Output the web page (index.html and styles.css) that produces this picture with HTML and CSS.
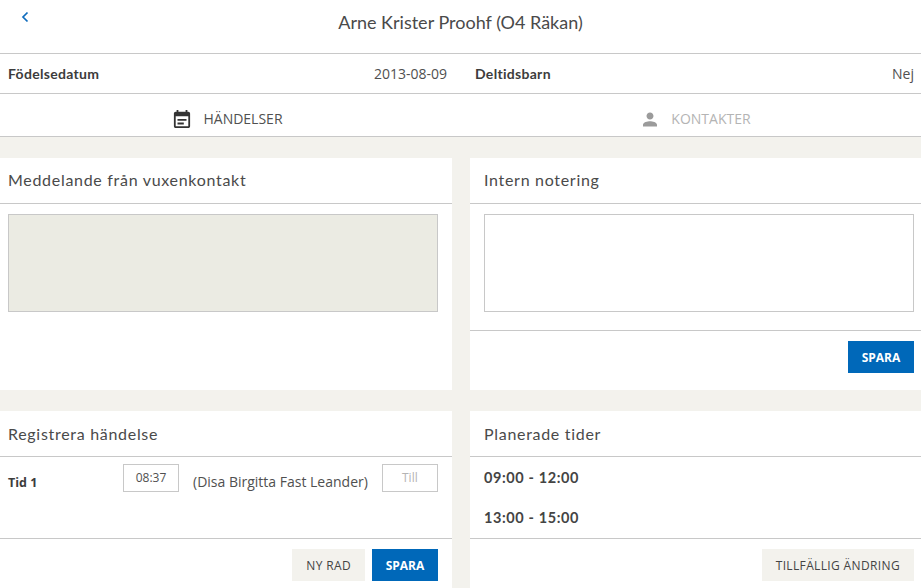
FILE: index.html
```html
<!DOCTYPE html>
<html lang="sv">
<head>
<meta charset="utf-8">
<title>Arne Krister Proohf</title>
<link rel="stylesheet" href="styles.css">
</head>
<body>
<header class="top">
  <a class="back" href="#" aria-label="Tillbaka">
    <svg width="10" height="12" viewBox="0 0 10 12"><path d="M7.500 1.500 3 6l4.500 4.500" fill="none" stroke="#0f6cbd" stroke-width="1.700"/></svg>
  </a>
  <h1 class="title">Arne Krister Proohf (O4 Räkan)</h1>
</header>
<section class="info">
  <div class="info-cell info-left"><strong class="info-label">Födelsedatum</strong><span>2013-08-09</span></div>
  <div class="info-cell info-right"><strong class="info-label">Deltidsbarn</strong><span>Nej</span></div>
</section>
<nav class="tabs">
  <div class="tab tab-first">
    <svg class="tab-icon" width="24" height="24" viewBox="0 0 24 24"><path fill="#333" d="M17 12H7v2h10v-2zm-3 4H7v2h7v-2zM19 4h-1V2h-2v2H8V2H6v2H5c-1.100 0-2 .9-2 2v14c0 1.100.9 2 2 2h14c1.100 0 2-.9 2-2V6c0-1.100-.9-2-2-2zm0 16H5V9h14v11z" transform="translate(1.200 1.200) scale(.9)"/></svg>
    <span>HÄNDELSER</span>
  </div>
  <div class="tab tab-muted">
    <svg class="tab-icon" width="24" height="24" viewBox="0 0 24 24"><path fill="#9b9b9b" d="M12 12c2.200 0 4-1.800 4-4s-1.800-4-4-4-4 1.800-4 4 1.800 4 4 4zm0 2c-2.700 0-8 1.300-8 4v2h16v-2c0-2.700-5.300-4-8-4z" transform="translate(1.500 2) scale(.875)"/></svg>
    <span>KONTAKTER</span>
  </div>
</nav>
<main class="grid">
  <section class="panel">
    <h2 class="panel-head">Meddelande från vuxenkontakt</h2>
    <div class="panel-body"><div class="box box-filled"></div></div>
  </section>
  <section class="panel">
    <h2 class="panel-head panel-head-right">Intern notering</h2>
    <div class="panel-body panel-body-right"><div class="box"></div></div>
    <div class="panel-foot panel-foot-right panel-foot-tall"><button class="btn btn-primary btn-wide">SPARA</button></div>
  </section>
  <section class="panel">
    <h2 class="panel-head panel-head-low">Registrera händelse</h2>
    <div class="panel-body event">
      <strong class="event-label">Tid 1</strong>
      <div class="time">08:37</div>
      <span class="event-name">(Disa Birgitta Fast Leander)</span>
      <div class="time time-empty">Till</div>
    </div>
    <div class="panel-foot panel-foot-left">
      <button class="btn">NY RAD</button>
      <button class="btn btn-primary btn-wide">SPARA</button>
    </div>
  </section>
  <section class="panel">
    <h2 class="panel-head panel-head-right panel-head-low">Planerade tider</h2>
    <div class="panel-body panel-body-right times">
      <p class="slot">09:00 - 12:00</p>
      <p class="slot">13:00 - 15:00</p>
    </div>
    <div class="panel-foot panel-foot-right"><button class="btn">TILLFÄLLIG ÄNDRING</button></div>
  </section>
</main>
</body>
</html>
```
FILE: styles.css
```css
* { box-sizing: border-box; }
html, body { height: 100%; }
body {
  margin: 0;
  background: #fff;
  color: #505050;
  font-family: "Open Sans", "Liberation Sans", sans-serif;
  font-size: 14px;
  overflow: hidden;
}
.top {
  position: relative;
  height: 54px;
  border-bottom: 1px solid #c8c8c8;
  display: flex;
  justify-content: center;
  padding-top: 11px;
}
.back {
  position: absolute;
  left: 20px;
  top: 11px;
  display: block;
  line-height: 0;
}
.title {
  margin: 0;
  font-family: "Lato", sans-serif;
  font-weight: 400;
  font-size: 18px;
  line-height: 22px;
  color: #4a4a4a;
}
.info {
  height: 40px;
  border-bottom: 1px solid #c8c8c8;
  display: flex;
}
.info-cell {
  display: flex;
  justify-content: space-between;
  align-items: center;
}
.info-left { width: 447px; padding-left: 8px; }
.info-right { flex: 1; padding: 0 7px 0 28px; }
.info-label {
  font-family: "Lato", sans-serif;
  font-weight: 700;
  font-size: 14px;
  letter-spacing: .3px;
  color: #3c3c3c;
}
.tabs {
  height: 43px;
  border-bottom: 1px solid #c8c8c8;
  display: flex;
}
.tab {
  flex: 1;
  display: flex;
  justify-content: center;
  align-items: center;
  gap: 9px;
  padding-top: 11px;
  padding-bottom: 4px;
  padding-left: 8px;
  color: #505050;
}
.tab-first { padding-left: 0; padding-right: 7px; }
.tab-muted { color: #b4b4b4; }
.tab-icon { flex: none; }
.grid {
  background: #f3f2ed;
  height: 451px;
  padding-top: 21px;
  display: grid;
  grid-template-columns: 452px 451px;
  grid-template-rows: 232px 177px;
  column-gap: 18px;
  row-gap: 21px;
}
.panel {
  background: #fff;
  display: flex;
  flex-direction: column;
}
.panel-head {
  flex: none;
  margin: 0;
  height: 46px;
  border-bottom: 1px solid #c8c8c8;
  padding: 11px 8px 0;
  font-family: "Lato", sans-serif;
  font-weight: 400;
  font-size: 16px;
  line-height: 22px;
  letter-spacing: .7px;
  color: #4a4a4a;
}
.panel-head-low { padding-top: 12px; }
.panel-head-right { padding-left: 14px; }
.panel-body { flex: 1; min-height: 0; padding: 10px 14px 0 8px; }
.panel-body-right { padding: 10px 7px 0 14px; }
.box {
  height: 98px;
  border: 1px solid #c8c8c8;
  background: #fff;
}
.box-filled { background: #ebebe3; }
.panel-foot {
  flex: none;
  height: 50px;
  border-top: 1px solid #c8c8c8;
  display: flex;
  justify-content: flex-end;
  align-items: flex-start;
  gap: 7px;
  padding-top: 10px;
}
.panel-foot-tall { height: 60px; }
.panel-foot-left { padding-right: 14px; }
.panel-foot-right { padding-right: 7px; }
.btn {
  height: 32px;
  border: 0;
  padding: 0 14px;
  background: #f3f2ed;
  color: #444;
  font-family: "Open Sans", sans-serif;
  font-size: 12px;
  font-weight: 400;
  letter-spacing: .36px;
}
.btn-primary {
  background: #0068b9;
  color: #fff;
  font-weight: 700;
  letter-spacing: 0;
}
.btn-wide { width: 66px; padding: 0; }
.event {
  display: flex;
  align-items: flex-start;
  padding-top: 7px;
}
.event-label {
  width: 115px;
  margin-top: 10px;
  font-size: 12.500px;
  line-height: 18px;
  color: #3c3c3c;
}
.time {
  width: 56px;
  height: 28px;
  border: 1px solid #c8c8c8;
  font-size: 12px;
  line-height: 25px;
  text-align: center;
}
.time-empty { color: #b4b4b4; }
.event-name {
  margin: 8px 14px 0;
  line-height: 20px;
  white-space: nowrap;
}
.times { padding-top: 12px; }
.slot {
  margin: 0 0 22px;
  font-family: "Lato", sans-serif;
  font-weight: 700;
  font-size: 14.500px;
  line-height: 18px;
  letter-spacing: .6px;
  color: #444;
}
```
